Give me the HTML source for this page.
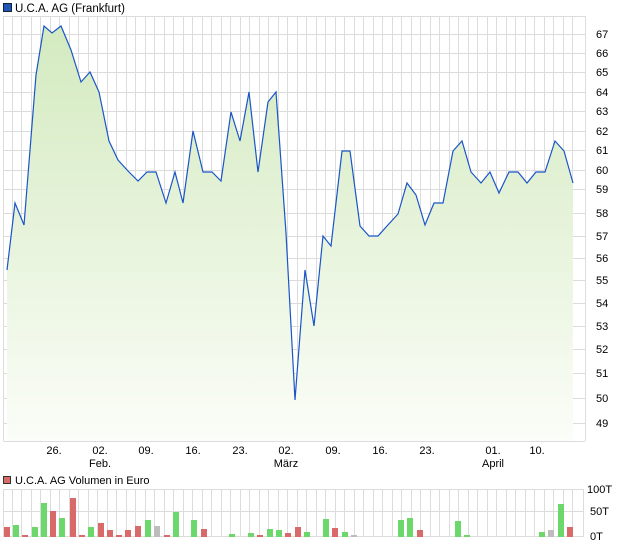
<!DOCTYPE html><html><head><style>body{margin:0;background:#fff;width:620px;height:546px;overflow:hidden;font-family:"Liberation Sans",sans-serif}</style></head><body>
<svg width="620" height="546" xmlns="http://www.w3.org/2000/svg" font-family="Liberation Sans, sans-serif" font-size="11" fill="#000">
<defs><linearGradient id="g" x1="0" y1="0" x2="0" y2="1"><stop offset="0" stop-color="#d3eabf"/><stop offset="1" stop-color="#fbfdf8"/></linearGradient></defs>
<rect x="3.5" y="3.5" width="8" height="8" fill="#1f55b5" stroke="#123"/>
<text x="15" y="12" font-size="11.5">U.C.A. AG (Frankfurt)</text>
<g stroke="#dcdcdc" stroke-width="1" id="vg">
<path d="M3.5 16V441M585.5 16V441M3.5 16.5H585M3.5 441.5H585"/>
<path d="M12.5 16V441M21.5 16V441M31.5 16V441M40.5 16V441M50.5 16V441M59.5 16V441M69.5 16V441M78.5 16V441M88.5 16V441M97.5 16V441M107.5 16V441M116.5 16V441M126.5 16V441M135.5 16V441M145.5 16V441M154.5 16V441M164.5 16V441M173.5 16V441M183.5 16V441M192.5 16V441M202.5 16V441M211.5 16V441M221.5 16V441M230.5 16V441M240.5 16V441M249.5 16V441M259.5 16V441M268.5 16V441M278.5 16V441M287.5 16V441M297.5 16V441M306.5 16V441M316.5 16V441M325.5 16V441M335.5 16V441M344.5 16V441M354.5 16V441M363.5 16V441M373.5 16V441M382.5 16V441M392.5 16V441M401.5 16V441M411.5 16V441M420.5 16V441M430.5 16V441M439.5 16V441M449.5 16V441M458.5 16V441M468.5 16V441M477.5 16V441M487.5 16V441M496.5 16V441M506.5 16V441M515.5 16V441M525.5 16V441M534.5 16V441M544.5 16V441M553.5 16V441M563.5 16V441M572.5 16V441"/>
<path d="M3 34.5H585M3 53.5H585M3 72.5H585M3 92.5H585M3 111.5H585M3 131.5H585M3 150.5H585M3 170.5H585M3 189.5H585M3 213.5H585M3 236.5H585M3 258.5H585M3 280.5H585M3 303.5H585M3 326.5H585M3 349.5H585M3 373.5H585M3 398.5H585M3 423.5H585"/>
</g>
<path fill="url(#g)" d="M7 270L15 203L24 225L36 75L44 26L52 33L61 26L71 50L81 82L90 72L99 92L109 141L118 160L128 171L138 181L147 172L156 172L166 203L175 172L183 203L193 131L203 172L212 172L221 181L231 112L240 141L249 92L258 172L268 102L276 92L286 233L295 400L305 270L314 326L323 236L331 246L342 151L350 151L360 226L369 236L378 236L387 226L398 214L407 183L416 195L425 225L434 203L443 203L453 151L462 141L471 172L481 183L490 172L499 193L509 172L518 172L527 183L536 172L545 172L555 141L564 151L573 183L573 441L7 441Z"/>
<path fill="none" stroke="#1a55c8" stroke-width="1.2" d="M7 270L15 203L24 225L36 75L44 26L52 33L61 26L71 50L81 82L90 72L99 92L109 141L118 160L128 171L138 181L147 172L156 172L166 203L175 172L183 203L193 131L203 172L212 172L221 181L231 112L240 141L249 92L258 172L268 102L276 92L286 233L295 400L305 270L314 326L323 236L331 246L342 151L350 151L360 226L369 236L378 236L387 226L398 214L407 183L416 195L425 225L434 203L443 203L453 151L462 141L471 172L481 183L490 172L499 193L509 172L518 172L527 183L536 172L545 172L555 141L564 151L573 183"/>
<g font-size="11">
<text x="596" y="38">67</text><text x="596" y="57">66</text><text x="596" y="76">65</text><text x="596" y="96">64</text><text x="596" y="115">63</text><text x="596" y="135">62</text><text x="596" y="154">61</text><text x="596" y="174">60</text><text x="596" y="193">59</text><text x="596" y="217">58</text><text x="596" y="240">57</text><text x="596" y="262">56</text><text x="596" y="284">55</text><text x="596" y="307">54</text><text x="596" y="330">53</text><text x="596" y="353">52</text><text x="596" y="377">51</text><text x="596" y="402">50</text><text x="596" y="427">49</text>
</g>
<g font-size="11" text-anchor="middle">
<text x="54" y="454">26.</text><text x="100" y="454">02.</text><text x="146" y="454">09.</text><text x="193" y="454">16.</text><text x="240" y="454">23.</text><text x="286" y="454">02.</text><text x="333" y="454">09.</text><text x="380" y="454">16.</text><text x="427" y="454">23.</text><text x="493" y="454">01.</text><text x="537" y="454">10.</text>
<text x="100" y="467">Feb.</text><text x="286" y="467">März</text><text x="493" y="467">April</text>
</g>
<rect x="3.5" y="476.5" width="7" height="7" fill="#d96a6a" stroke="#333"/>
<text x="15" y="484">U.C.A. AG Volumen in Euro</text>
<g stroke="#dcdcdc">
<path d="M3.5 489V537M583.5 489V537M3 489.5H583M3 511.5H583M3 536.5H583"/>
<path d="M12.5 489V537M21.5 489V537M31.5 489V537M40.5 489V537M50.5 489V537M59.5 489V537M69.5 489V537M78.5 489V537M88.5 489V537M97.5 489V537M107.5 489V537M116.5 489V537M126.5 489V537M135.5 489V537M145.5 489V537M154.5 489V537M164.5 489V537M173.5 489V537M183.5 489V537M192.5 489V537M202.5 489V537M211.5 489V537M221.5 489V537M230.5 489V537M240.5 489V537M249.5 489V537M259.5 489V537M268.5 489V537M278.5 489V537M287.5 489V537M297.5 489V537M306.5 489V537M316.5 489V537M325.5 489V537M335.5 489V537M344.5 489V537M354.5 489V537M363.5 489V537M373.5 489V537M382.5 489V537M392.5 489V537M401.5 489V537M411.5 489V537M420.5 489V537M430.5 489V537M439.5 489V537M449.5 489V537M458.5 489V537M468.5 489V537M477.5 489V537M487.5 489V537M496.5 489V537M506.5 489V537M515.5 489V537M525.5 489V537M534.5 489V537M544.5 489V537M553.5 489V537M563.5 489V537M572.5 489V537"/>
</g>
<g>
<rect x="4" y="527" width="6" height="10" fill="#d96a6a"/><rect x="13" y="525" width="6" height="12" fill="#6cd86c"/><rect x="22" y="535" width="6" height="2" fill="#d96a6a"/><rect x="32" y="527" width="6" height="10" fill="#6cd86c"/><rect x="41" y="503" width="6" height="34" fill="#6cd86c"/><rect x="50" y="511" width="6" height="26" fill="#d96a6a"/><rect x="59" y="518" width="6" height="19" fill="#6cd86c"/><rect x="70" y="498" width="6" height="39" fill="#d96a6a"/><rect x="79" y="535" width="6" height="2" fill="#d96a6a"/><rect x="88" y="527" width="6" height="10" fill="#6cd86c"/><rect x="98" y="523" width="6" height="14" fill="#d96a6a"/><rect x="107" y="530" width="6" height="7" fill="#d96a6a"/><rect x="116" y="535" width="6" height="2" fill="#d96a6a"/><rect x="125" y="530" width="6" height="7" fill="#d96a6a"/><rect x="135" y="526" width="6" height="11" fill="#d96a6a"/><rect x="145" y="520" width="6" height="17" fill="#6cd86c"/><rect x="154" y="526" width="6" height="11" fill="#bdbdbd"/><rect x="164" y="535" width="6" height="2" fill="#d96a6a"/><rect x="173" y="512" width="6" height="25" fill="#6cd86c"/><rect x="191" y="520" width="6" height="17" fill="#6cd86c"/><rect x="201" y="529" width="6" height="8" fill="#d96a6a"/><rect x="229" y="534" width="6" height="3" fill="#6cd86c"/><rect x="248" y="533" width="6" height="4" fill="#6cd86c"/><rect x="257" y="535" width="6" height="2" fill="#d96a6a"/><rect x="267" y="529" width="6" height="8" fill="#6cd86c"/><rect x="276" y="530" width="6" height="7" fill="#6cd86c"/><rect x="285" y="533" width="6" height="4" fill="#d96a6a"/><rect x="295" y="527" width="6" height="10" fill="#d96a6a"/><rect x="304" y="532" width="6" height="5" fill="#6cd86c"/><rect x="323" y="519" width="6" height="18" fill="#6cd86c"/><rect x="332" y="528" width="6" height="9" fill="#d96a6a"/><rect x="342" y="532" width="6" height="5" fill="#6cd86c"/><rect x="351" y="535" width="6" height="2" fill="#bdbdbd"/><rect x="398" y="520" width="6" height="17" fill="#6cd86c"/><rect x="407" y="518" width="6" height="19" fill="#6cd86c"/><rect x="417" y="530" width="6" height="7" fill="#d96a6a"/><rect x="455" y="521" width="6" height="16" fill="#6cd86c"/><rect x="464" y="535" width="6" height="2" fill="#6cd86c"/><rect x="539" y="532" width="6" height="5" fill="#6cd86c"/><rect x="548" y="530" width="6" height="7" fill="#bdbdbd"/><rect x="558" y="504" width="6" height="33" fill="#6cd86c"/><rect x="567" y="527" width="6" height="10" fill="#d96a6a"/>
</g>
<g font-size="11"><text x="587" y="493">100T</text><text x="590" y="515">50T</text><text x="590" y="540">0T</text></g>
</svg>
</body></html>
